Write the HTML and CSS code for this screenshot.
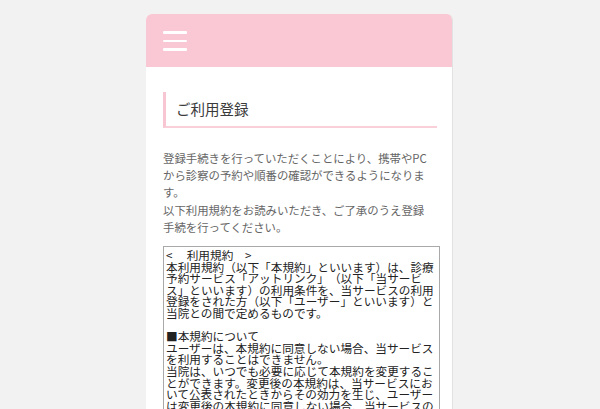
FILE: index.html
```html
<!DOCTYPE html>
<html lang="ja">
<head>
<meta charset="utf-8">
<title>ご利用登録</title>
<link rel="stylesheet" href="styles.css">
</head>
<body>
<div class="card">
  <header class="topbar">
    <button class="menu-btn" type="button" aria-label="メニュー">
      <span class="bar"></span><span class="bar"></span><span class="bar"></span>
    </button>
  </header>
  <main class="content">
    <h1 class="page-title">ご利用登録</h1>
    <p class="lead">登録手続きを行っていただくことにより、携帯やPCから診察の予約や順番の確認ができるようになります。<br>以下利用規約をお読みいただき、ご了承のうえ登録手続を行ってください。</p>
    <textarea class="terms" readonly>&lt;　 利用規約　&gt;
本利用規約（以下「本規約」といいます）は、診療予約サービス「アットリンク」（以下「当サービス」といいます）の利用条件を、当サービスの利用登録をされた方（以下「ユーザー」といいます）と当院との間で定めるものです。

■本規約について
ユーザーは、本規約に同意しない場合、当サービスを利用することはできません。
当院は、いつでも必要に応じて本規約を変更することができます。変更後の本規約は、当サービスにおいて公表されたときからその効力を生じ、ユーザーは変更後の本規約に同意しない場合、当サービスの利用を継続することはできません。

■利用登録について
利用登録は、ユーザーご本人が本規約に同意のうえ、当院の定める方法によって行うものとします。当院は、登録内容に虚偽があった場合、その他当院が不適当と判断した場合には、利用登録をお断りすることがあります。

■個人情報の取扱いについて
当院は、当サービスの利用によって取得した個人情報を、診療予約および順番のご案内の目的にのみ利用し、法令に基づく場合を除き、ご本人の同意なく第三者に提供することはありません。

■禁止事項
ユーザーは、当サービスの利用にあたり、以下の行為をしてはなりません。
・法令または公序良俗に違反する行為
・当サービスの運営を妨害する行為
・他のユーザーになりすます行為
・虚偽の予約を繰り返し行う行為

■免責事項
当院は、通信回線やシステムの障害等により当サービスが利用できなかったことによってユーザーに生じた損害について、一切の責任を負わないものとします。</textarea>
  </main>
</div>
</body>
</html>
```

FILE: styles.css
```css
html, body {
  margin: 0;
  padding: 0;
}

body {
  background: #f2f2f2;
  font-family: "Noto Sans CJK JP", "Noto Sans", sans-serif;
  text-spacing-trim: space-all;
}

.card {
  width: 306px;
  margin: 14px 0 0 146px;
  min-height: 420px;
  background: #ffffff;
  border-radius: 6px 6px 0 0;
  border-right: 1px solid #e2e2e2;
  overflow: hidden;
}

.topbar {
  height: 53px;
  background: #fac8d4;
  padding: 17px 0 0 17px;
  box-sizing: border-box;
}

.menu-btn {
  display: flex;
  flex-direction: column;
  gap: 6px;
  width: 24px;
  padding: 0;
  margin: 0;
  border: 0;
  background: transparent;
}

.menu-btn .bar {
  display: block;
  width: 24px;
  height: 2.5px;
  border-radius: 1px;
  background: #ffffff;
}

.content {
  padding: 25px 0 0 17px;
}

.page-title {
  width: 274px;
  box-sizing: border-box;
  margin: 0;
  padding: 6px 0 6px 10px;
  border-left: 3px solid #f8c6d2;
  border-bottom: 2px solid #f9d0da;
  font-size: 14.5px;
  line-height: 21.75px;
  font-weight: normal;
  color: #3a3a3a;
}

.lead {
  width: 270px;
  margin: 22px 0 0 0;
  font-size: 11.4px;
  line-height: 17.25px;
  color: #666666;
}

.terms {
  display: block;
  width: 277px;
  height: 230px;
  box-sizing: border-box;
  margin: 10px 0 0 0;
  padding: 2px 0 0 2px;
  border: 1px solid #a9a9a9;
  border-radius: 0;
  resize: none;
  font-family: "Noto Sans CJK JP", sans-serif;
  font-size: 11.65px;
  line-height: 11.6px;
  color: #222222;
  background: #ffffff;
  overflow-y: scroll;
  outline: none;
  text-spacing-trim: space-all;
  line-break: strict;
}

.terms::-webkit-scrollbar {
  width: 5px;
}

.terms::-webkit-scrollbar-track {
  background: transparent;
}

.terms::-webkit-scrollbar-thumb {
  background: linear-gradient(#c2c2ca, #c2c2ca) left 3px / 2px 13px no-repeat;
}
```
